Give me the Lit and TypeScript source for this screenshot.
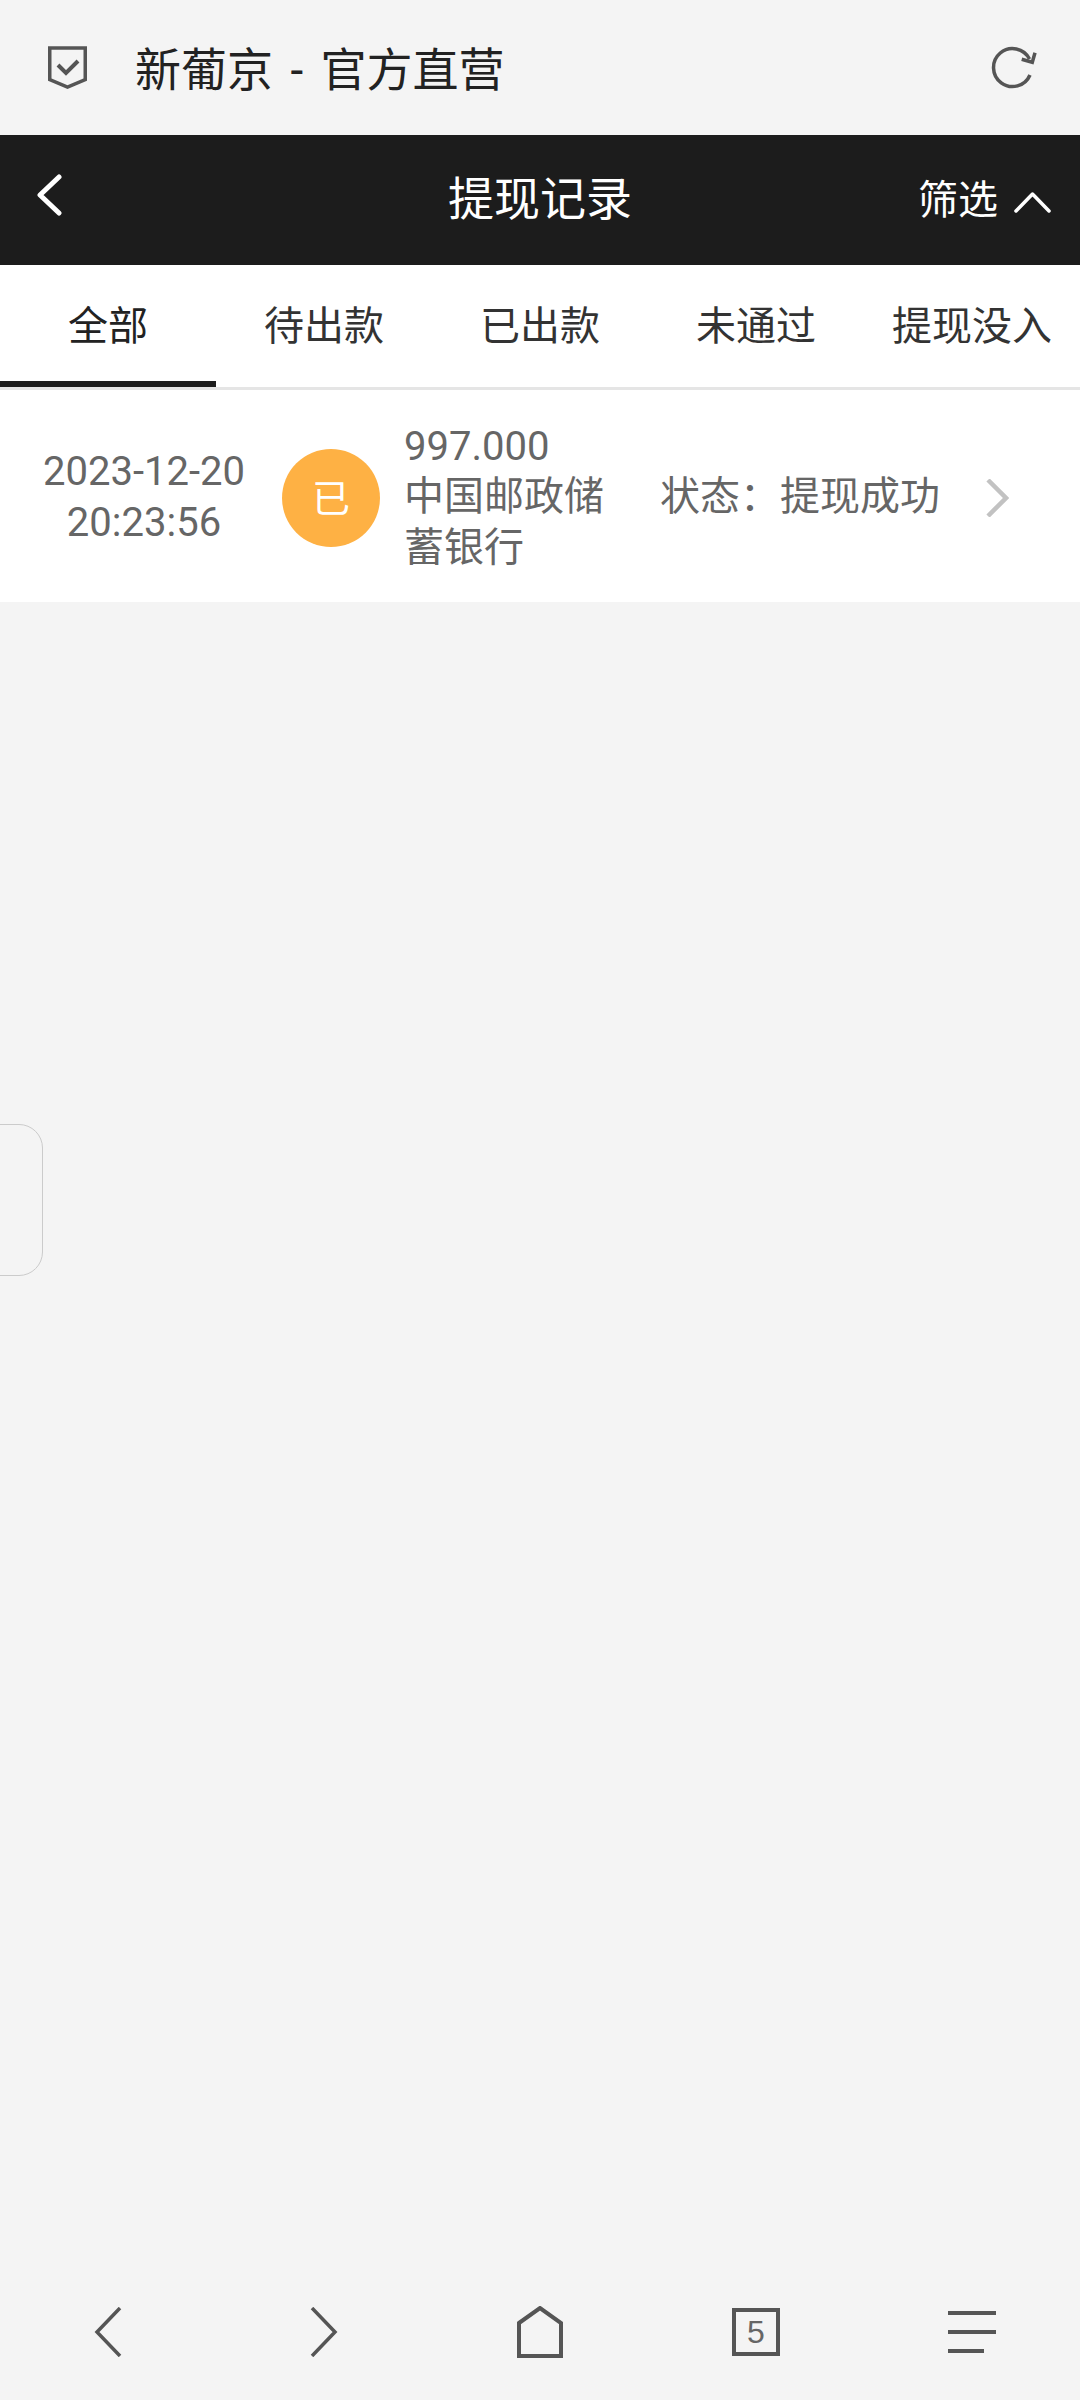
import { LitElement, html, css, svg } from "lit";
import { customElement } from "lit/decorators.js";

@customElement("app-root")
export class AppRoot extends LitElement {
  static styles = css`
    :host {
      display: block;
      width: 1080px;
      height: 2400px;
      background: #f4f4f4;
      font-family: Roboto, "Noto Sans CJK SC", sans-serif;
      position: relative;
      overflow: hidden;
    }
    .page { display: flex; flex-direction: column; height: 100%; }
    svg { display: block; flex: none; }
    .top {
      height: 135px;
      display: flex;
      align-items: center;
      padding: 0 42px 0 48px;
      color: #222;
      font-size: 46px;
    }
    .top-title { margin-left: 48px; margin-bottom: 3px; flex: 1; white-space: pre; word-spacing: 6px; }
    .header {
      height: 130px;
      background: #1c1c1c;
      color: #fff;
      display: grid;
      grid-template-columns: 1fr auto 1fr;
      align-items: center;
      padding: 0 29px;
    }
    .back { margin-left: 8px; margin-bottom: 10px; }
    .header-title { font-size: 46px; margin-bottom: 10px; }
    .filter {
      justify-self: end;
      display: flex;
      align-items: center;
      gap: 16px;
      font-size: 40px;
      margin-bottom: 6px;
    }
    .up { margin-top: 10px; }
    .tabs {
      height: 125px;
      background: #fff;
      display: grid;
      grid-template-columns: repeat(5, 216px);
      border-bottom: 3px solid #e5e5e5;
      box-sizing: border-box;
    }
    .tab {
      display: flex;
      align-items: center;
      justify-content: center;
      font-size: 40px;
      color: #333;
      white-space: nowrap;
      border-bottom: 6px solid transparent;
    }
    .tab.active { color: #222; border-bottom-color: #1c1c1c; }
    .row {
      height: 212px;
      padding-top: 3px;
      background: #fff;
      display: flex;
      align-items: center;
      color: #666;
      font-size: 40px;
      line-height: 50.5px;
      box-sizing: border-box;
    }
    .date { width: 240px; margin-left: 24px; text-align: center; white-space: nowrap; }
    .badge {
      width: 98px;
      height: 98px;
      box-sizing: border-box;
      padding-top: 3px;
      margin-left: 18px;
      border-radius: 50%;
      background: #feb144;
      color: #fff;
      font-size: 38px;
      display: flex;
      align-items: center;
      justify-content: center;
      flex: none;
    }
    .info { width: 220px; margin-left: 24px; }
    .status { margin-left: 36px; width: 326px; white-space: nowrap; }
    .spacer { flex: 1; }
    .nav {
      height: 136px;
      display: grid;
      grid-template-columns: repeat(5, 216px);
    }
    .nav-item { display: flex; align-items: center; justify-content: center; }
    .count {
      width: 48px;
      height: 48px;
      box-sizing: border-box;
      border: 4px solid #555;
      display: flex;
      align-items: center;
      justify-content: center;
      font-size: 32px;
      color: #666;
      font-family: "Liberation Sans", sans-serif;
    }
    .side {
      position: absolute;
      left: -2px;
      top: 1124px;
      width: 45px;
      height: 152px;
      box-sizing: border-box;
      border: 1.5px solid #cbcbcb;
      border-radius: 0 24px 24px 0;
    }
  `;

  private tabs = ["全部", "待出款", "已出款", "未通过", "提现没入"];
  private statusText = "状态\uFF1A提现成功";

  private shield = svg`<svg width="39" height="43" viewBox="0 0 39 43" fill="none" stroke="#555" stroke-width="3.500"><path d="M1.750 2H37.250V33.500L19.500 41L1.750 33.500Z"/><path d="M10 19L18 27L30 15" stroke-width="4"/></svg>`;
  private refresh = svg`<svg width="48" height="44" viewBox="0 0 48 44" fill="none" stroke="#555" stroke-width="3.500"><path d="M40 29A19 19 0 1 1 39.500 13"/><path d="M45 6.700L42.300 16.300L31.700 13.300"/></svg>`;
  private back = svg`<svg class="back" width="25" height="42" viewBox="0 0 25 42" fill="none" stroke="#fff" stroke-width="5" stroke-linecap="round" stroke-linejoin="round"><path d="M22 3L3 21L22 39"/></svg>`;
  private up = svg`<svg class="up" width="37" height="22" viewBox="0 0 37 22" fill="none" stroke="#fff" stroke-width="3.500" stroke-linecap="round" stroke-linejoin="round"><path d="M2 20L18.500 3L35 20"/></svg>`;
  private more = svg`<svg width="23" height="38" viewBox="0 0 23 38" fill="none" stroke="#c2c2c2" stroke-width="4.500"><path d="M2 1L20 19L2 37"/></svg>`;
  private prev = svg`<svg width="28" height="50" viewBox="0 0 28 50" fill="none" stroke="#555" stroke-width="3.500"><path d="M26 1L3 25L26 49"/></svg>`;
  private next = svg`<svg width="28" height="50" viewBox="0 0 28 50" fill="none" stroke="#555" stroke-width="3.500"><path d="M2 1L25 25L2 49"/></svg>`;
  private home = svg`<svg width="46" height="52" viewBox="0 0 46 52" fill="none" stroke="#555" stroke-width="4"><path d="M2 17L23 2L44 17V50H2Z"/></svg>`;
  private menu = svg`<svg width="48" height="42" viewBox="0 0 48 42" fill="none" stroke="#555" stroke-width="4"><path d="M0 2H48M0 21H48M0 40H36"/></svg>`;

  render() {
    return html`
      <div class="page" lang="zh-CN">
        <div class="top">
          ${this.shield}
          <span class="top-title">新葡京 - 官方直营</span>
          ${this.refresh}
        </div>
        <div class="header">
          ${this.back}
          <span class="header-title">提现记录</span>
          <span class="filter">筛选 ${this.up}</span>
        </div>
        <div class="tabs">
          ${this.tabs.map(
            (t, i) => html`<div class="tab ${i === 0 ? "active" : ""}">${t}</div>`
          )}
        </div>
        <div class="row">
          <div class="date">2023-12-20<br />20:23:56</div>
          <div class="badge">已</div>
          <div class="info">997.000<br />中国邮政储蓄银行</div>
          <div class="status">${this.statusText}</div>
          ${this.more}
        </div>
        <div class="spacer"></div>
        <div class="nav">
          <div class="nav-item">${this.prev}</div>
          <div class="nav-item">${this.next}</div>
          <div class="nav-item">${this.home}</div>
          <div class="nav-item"><div class="count">5</div></div>
          <div class="nav-item">${this.menu}</div>
        </div>
        <div class="side"></div>
      </div>
    `;
  }
}
